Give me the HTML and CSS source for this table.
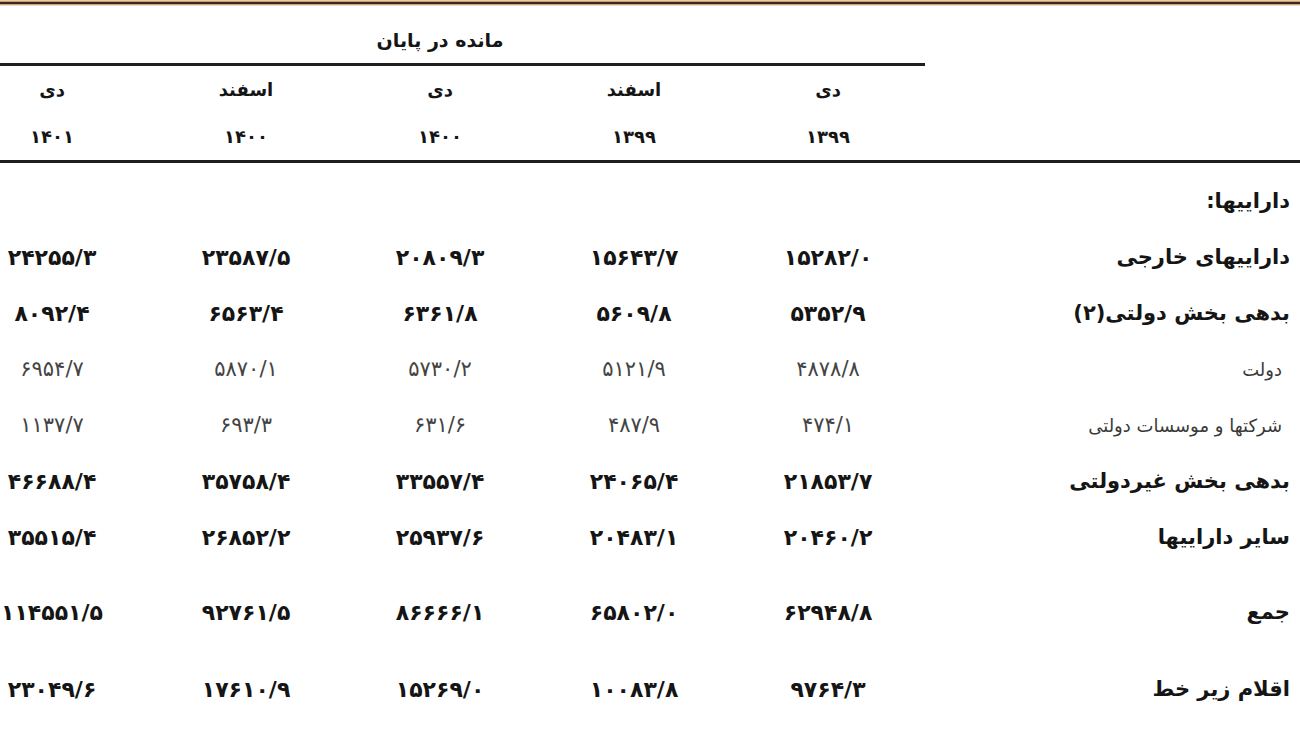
FILE: index.html
```html
<!DOCTYPE html>
<html lang="fa" dir="rtl">
<head>
<meta charset="utf-8">
<title>جدول دارایی‌ها</title>
<link rel="stylesheet" href="styles.css">
</head>
<body>
<div class="topbar"></div>
<div class="sheet">
  <div class="title">مانده در پایان</div>

  <div class="cell lbl-empty"></div>
  <div class="cell head">دی</div>
  <div class="cell head">اسفند</div>
  <div class="cell head">دی</div>
  <div class="cell head">اسفند</div>
  <div class="cell head last">دی</div>

  <div class="cell lbl-empty"></div>
  <div class="cell head">۱۳۹۹</div>
  <div class="cell head">۱۳۹۹</div>
  <div class="cell head">۱۴۰۰</div>
  <div class="cell head">۱۴۰۰</div>
  <div class="cell head last">۱۴۰۱</div>

  <div class="rule"></div>

  <div class="cell label section">داراییها:</div>
  <div class="cell section-fill"></div>

  <div class="cell label">داراییهای خارجی</div>
  <div class="cell num">۱۵۲۸۲/۰</div>
  <div class="cell num">۱۵۶۴۳/۷</div>
  <div class="cell num">۲۰۸۰۹/۳</div>
  <div class="cell num">۲۳۵۸۷/۵</div>
  <div class="cell num last">۲۴۲۵۵/۳</div>

  <div class="cell label">بدهی بخش دولتی(۲)</div>
  <div class="cell num">۵۳۵۲/۹</div>
  <div class="cell num">۵۶۰۹/۸</div>
  <div class="cell num">۶۳۶۱/۸</div>
  <div class="cell num">۶۵۶۳/۴</div>
  <div class="cell num last">۸۰۹۲/۴</div>

  <div class="cell label sub">دولت</div>
  <div class="cell num light">۴۸۷۸/۸</div>
  <div class="cell num light">۵۱۲۱/۹</div>
  <div class="cell num light">۵۷۳۰/۲</div>
  <div class="cell num light">۵۸۷۰/۱</div>
  <div class="cell num light last">۶۹۵۴/۷</div>

  <div class="cell label sub">شرکتها و موسسات دولتی</div>
  <div class="cell num light">۴۷۴/۱</div>
  <div class="cell num light">۴۸۷/۹</div>
  <div class="cell num light">۶۳۱/۶</div>
  <div class="cell num light">۶۹۳/۳</div>
  <div class="cell num light last">۱۱۳۷/۷</div>

  <div class="cell label">بدهی بخش غیردولتی</div>
  <div class="cell num">۲۱۸۵۳/۷</div>
  <div class="cell num">۲۴۰۶۵/۴</div>
  <div class="cell num">۳۳۵۵۷/۴</div>
  <div class="cell num">۳۵۷۵۸/۴</div>
  <div class="cell num last">۴۶۶۸۸/۴</div>

  <div class="cell label">سایر داراییها</div>
  <div class="cell num">۲۰۴۶۰/۲</div>
  <div class="cell num">۲۰۴۸۳/۱</div>
  <div class="cell num">۲۵۹۳۷/۶</div>
  <div class="cell num">۲۶۸۵۲/۲</div>
  <div class="cell num last">۳۵۵۱۵/۴</div>

  <div class="cell label total">جمع</div>
  <div class="cell num total">۶۲۹۴۸/۸</div>
  <div class="cell num total">۶۵۸۰۲/۰</div>
  <div class="cell num total">۸۶۶۶۶/۱</div>
  <div class="cell num total">۹۲۷۶۱/۵</div>
  <div class="cell num total last">۱۱۴۵۵۱/۵</div>

  <div class="cell label below">اقلام زیر خط</div>
  <div class="cell num below">۹۷۶۴/۳</div>
  <div class="cell num below">۱۰۰۸۳/۸</div>
  <div class="cell num below">۱۵۲۶۹/۰</div>
  <div class="cell num below">۱۷۶۱۰/۹</div>
  <div class="cell num below last">۲۳۰۴۹/۶</div>
</div>
</body>
</html>
```

FILE: styles.css
```css
html, body {
  margin: 0;
  padding: 0;
  background: #ffffff;
}

body {
  direction: rtl;
  font-family: "DejaVu Sans", sans-serif;
  color: #151515;
  width: 1300px;
  height: 731px;
  overflow: hidden;
}

.topbar {
  height: 6px;
  background: linear-gradient(#e8cba8 0 1px, #c99c70 1px 2px, #3a2818 2px 4px, #c8a07a 4px 5px, #efdcc6 5px 6px);
}

.sheet {
  display: grid;
  grid-template-columns: 375px repeat(4, 194px) 149px;
  direction: rtl;
}

.title {
  grid-column: 2 / span 5;
  height: 46px;
  padding-top: 11px;
  padding-right: 42px;
  display: flex;
  align-items: center;
  justify-content: center;
  font-weight: bold;
  font-size: 19px;
  border-bottom: 3px solid #1e1e1e;
  margin-left: -3px;
}

.cell {
  display: flex;
  align-items: center;
  justify-content: center;
  height: 56px;
  white-space: nowrap;
}

.head {
  height: 47px;
  font-weight: bold;
  font-size: 18px;
}

.lbl-empty {
  height: 47px;
}

.last {
  padding-left: 0;
  padding-right: 45px;
}

.rule {
  grid-column: 1 / -1;
  height: 3px;
  background: #1e1e1e;
}

.label {
  justify-content: flex-start;
  padding-right: 10px;
  font-weight: bold;
  font-size: 21px;
}

.section {
  height: 56px;
  margin-top: 10px;
}

.section-fill {
  grid-column: 2 / span 5;
  height: 66px;
}

.sub {
  padding-right: 18px;
  font-weight: normal;
  font-size: 18px;
  color: #3a3a3a;
}

.num {
  font-weight: bold;
  font-size: 22px;
}

.num.light {
  font-weight: normal;
  font-size: 21px;
  color: #444444;
}

.total {
  height: 94px;
}

.below {
  height: 60px;
}
```
